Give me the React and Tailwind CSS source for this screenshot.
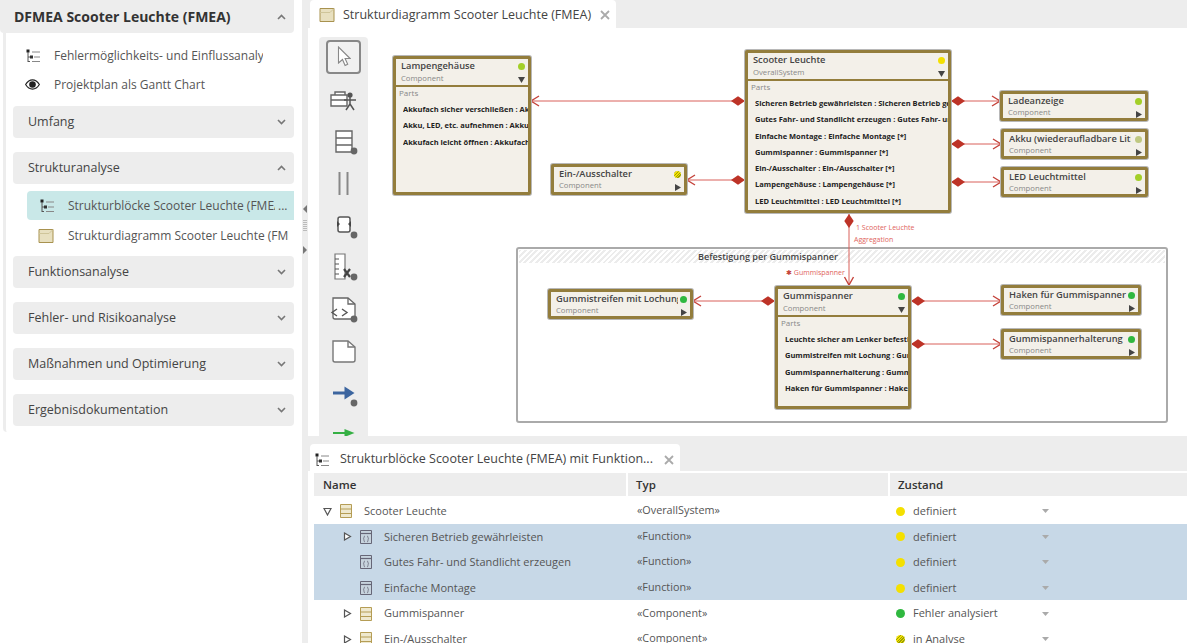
import React from "react";

const ListIcon = ({ className = "" }) => (
  <svg width="14" height="14" viewBox="0 0 14 14" className={className}>
    <rect x="0.5" y="0.5" width="3" height="3" fill="#222" />
    <path d="M2 3v10M2 8h2M2 12.5h2" stroke="#555" strokeWidth="1" fill="none" />
    <rect x="4" y="6.5" width="3" height="3" fill="#333" />
    <path d="M6 3h8M8 8h6M6 12.5h8" stroke="#888" strokeWidth="1" />
  </svg>
);

const DiagramIcon = ({ size = 16 }) => (
  <svg width={size} height={size} viewBox="0 0 16 16">
    <path d="M1 1.500h14v13H1z" fill="#e8e0c0" stroke="#a8924f" strokeWidth="1" />
    <path d="M15 1.500 11 5.500H1" fill="none" stroke="#cfc59a" strokeWidth="1" />
  </svg>
);

const EyeIcon = () => (
  <svg width="15" height="11" viewBox="0 0 16 12">
    <path d="M0.500 6C3 2 5.500 1 8 1s5 1 7.500 5C13 10 10.500 11 8 11S3 10 0.500 6z" fill="#fff" stroke="#222" strokeWidth="1.3" />
    <circle cx="8" cy="6" r="3.600" fill="#222" />
  </svg>
);

const Chevron = ({ up }) => (
  <svg width="9" height="6" viewBox="0 0 9 6">
    <path d={up ? "M1 5l3.500-3.500L8 5" : "M1 1l3.500 3.500L8 1"} fill="none" stroke="#777" strokeWidth="1.6" />
  </svg>
);

const CloseIcon = () => (
  <svg width="10" height="10" viewBox="0 0 10 10">
    <path d="M1 1l8 8M9 1l-8 8" stroke="#aaa" strokeWidth="1.8" />
  </svg>
);

const Section = ({ label, up, className = "" }) => (
  <div className={`flex h-8 items-center justify-between rounded bg-[#ededed] pl-[15px] pr-2 text-[12.5px] text-[#444] ${className}`}>
    <span>{label}</span>
    <Chevron up={up} />
  </div>
);

const Sidebar = () => (
  <div className="relative w-[302px] shrink-0 bg-white text-[12px]">
    <div className="flex h-[33px] w-[294px] items-center justify-between rounded-b bg-[#ededed] pl-[14px] pr-2">
      <span className="text-[14px] font-bold text-[#333]">DFMEA Scooter Leuchte (FMEA)</span>
      <Chevron up />
    </div>
    <div className="ml-[3px] h-[399px] w-[291px] rounded-bl border-l-[3px] border-[#ededed] pl-[7px]">
      <div className="pt-[8px]">
        <div className="flex h-[29px] items-center pt-[1px] text-[#555]">
          <ListIcon className="ml-[13px] mr-[14px] shrink-0" />
          <span className="w-[209px] overflow-hidden whitespace-nowrap">Fehlermöglichkeits- und Einflussanalyse</span>
        </div>
        <div className="flex h-[29px] items-center text-[#555]">
          <span className="ml-[12px] mr-[14px] flex"><EyeIcon /></span>
          <span>Projektplan als Gantt Chart</span>
        </div>
      </div>
      <Section label="Umfang" className="mt-[7px]" />
      <Section label="Strukturanalyse" up className="mt-[14px]" />
      <div className="ml-[14px] mt-[7px] flex h-[29px] items-center rounded-l bg-[#c9e8e8] pt-[1px] text-[#555]">
        <ListIcon className="ml-[13px] mr-[14px] shrink-0" />
        <span className="w-[207px] overflow-hidden whitespace-nowrap">Strukturblöcke Scooter Leuchte (FMEA) mit Funktionen</span>
        <span className="ml-[3px]">...</span>
      </div>
      <div className="ml-[14px] flex h-[29px] items-center pt-[2px] text-[#555]">
        <span className="ml-[11px] mr-[14px] flex"><DiagramIcon /></span>
        <span className="w-[221px] overflow-hidden whitespace-nowrap">Strukturdiagramm Scooter Leuchte (FMEA)</span>
      </div>
      <Section label="Funktionsanalyse" className="mt-[7px]" />
      <Section label="Fehler- und Risikoanalyse" className="mt-[14px]" />
      <Section label="Maßnahmen und Optimierung" className="mt-[14px]" />
      <Section label="Ergebnisdokumentation" className="mt-[14px]" />
    </div>
  </div>
);

const Splitter = () => (
  <div className="flex w-[6px] shrink-0 flex-col items-center bg-[#ededed] pt-[204px] text-[#666]">
    <svg width="4" height="10" viewBox="0 0 4 10"><path d="M4 1v8L0 5z" fill="#777" /></svg>
    <svg width="4" height="14" viewBox="0 0 4 14" className="mt-[5px]">
      <path d="M1 1v12M3 1v12" stroke="#888" strokeWidth="1" strokeDasharray="1 1" />
    </svg>
    <svg width="4" height="10" viewBox="0 0 4 10" className="mt-[12px]"><path d="M0 1v8l4-4z" fill="#777" /></svg>
  </div>
);

const Dot = () => <circle cx="25" cy="25" r="3.400" fill="#666" />;

const toolIcons = [
  <svg key="pointer" width="14" height="22" viewBox="0 0 14 22">
    <path d="M1.500 1v16l4-3.500 2.600 6 2.600-1.200-2.600-5.800h5z" fill="#fff" stroke="#888" strokeWidth="1.1" />
  </svg>,
  <svg key="actor" width="30" height="24" viewBox="0 0 30 24">
    <path d="M2 8h16v11H2zM2 13h16M6 8V5h10v3" fill="#fff" stroke="#666" strokeWidth="1.4" />
    <circle cx="21" cy="8" r="2.600" fill="#555" />
    <path d="M21 10v7M15 13h12M21 17l-4 6M21 17l4 6" stroke="#555" strokeWidth="1.5" fill="none" />
  </svg>,
  <svg key="table" width="30" height="30" viewBox="0 0 30 30">
    <path d="M7 5h16v21H7zM7 12h16M7 19h16" fill="#fff" stroke="#666" strokeWidth="1.4" />
    <Dot />
  </svg>,
  <svg key="lines" width="30" height="30" viewBox="0 0 30 30">
    <path d="M10.500 4v23M18.500 4v23" stroke="#888" strokeWidth="2" />
  </svg>,
  <svg key="port" width="30" height="30" viewBox="0 0 30 30">
    <rect x="9" y="7" width="12" height="15" rx="2" fill="#fff" stroke="#555" strokeWidth="1.5" />
    <path d="M8 11l3 3-3 3zM22 11l-3 3 3 3z" fill="#444" />
    <Dot />
  </svg>,
  <svg key="ruler" width="30" height="30" viewBox="0 0 30 30">
    <path d="M6 2h10v25H6z" fill="#fff" stroke="#777" strokeWidth="1.2" />
    <path d="M6 7h4M6 12h4M6 17h4M6 22h4" stroke="#555" strokeWidth="1.2" />
    <path d="M15 17l6 8M21 17l-6 8" stroke="#444" strokeWidth="2.2" />
    <Dot />
  </svg>,
  <svg key="code" width="30" height="30" viewBox="0 0 30 30">
    <path d="M4 4h15l7 6v13a2 2 0 0 1-2 2H6a2 2 0 0 1-2-2z" fill="#fff" stroke="#666" strokeWidth="1.3" />
    <path d="M19 4v6h7" fill="none" stroke="#666" strokeWidth="1.3" />
    <path d="M8 15l-5 3.500 5 3.500M13 15l5 3.500-5 3.500" fill="none" stroke="#555" strokeWidth="1.4" />
    <Dot />
  </svg>,
  <svg key="note" width="30" height="30" viewBox="0 0 30 30">
    <path d="M4 5h15l7 6v13a2 2 0 0 1-2 2H6a2 2 0 0 1-2-2z" fill="#fff" stroke="#777" strokeWidth="1.4" />
    <path d="M19 5v6h7" fill="none" stroke="#777" strokeWidth="1.4" />
  </svg>,
  <svg key="blue" width="30" height="30" viewBox="0 0 30 30">
    <path d="M4 15h13" stroke="#3c659f" strokeWidth="3" />
    <path d="M15.500 8.500l10 6.500-10 6.500z" fill="#3c659f" />
    <Dot />
  </svg>,
  <svg key="green" width="30" height="30" viewBox="0 0 30 30">
    <path d="M4 13h13" stroke="#35b044" strokeWidth="2" />
    <path d="M15.500 9l10 4-10 4z" fill="#35b044" />
  </svg>,
];

const Toolbar = () => (
  <div className="ml-[11px] mt-[9px] flex w-[49px] shrink-0 flex-col items-center overflow-hidden rounded-t bg-[#ededed] pt-[3px]">
    <div className="mb-[4px] flex h-[34px] w-[35px] shrink-0 items-center justify-center rounded border-2 border-[#888] bg-[#f1f1f1]">
      {toolIcons[0]}
    </div>
    {toolIcons.slice(1).map((icon) => (
      <div key={icon.key} className="flex h-[42px] w-full shrink-0 items-center justify-center">{icon}</div>
    ))}
  </div>
);

const statusDot = {
  lime: "bg-[#a3cf28]",
  yellow: "bg-[#f4e000]",
  green: "bg-[#2fb83f]",
  olive: "bg-[#bfc880]",
  hatch: "bg-[repeating-linear-gradient(135deg,#f4e000_0,#f4e000_1px,#9aa000_1px,#9aa000_2px)]",
};

const Node = ({ pos, title, sub = "Component", dot, parts, down }) => (
  <div className={`absolute rounded-[2px] border-[3px] border-[#937d3c] bg-[#f3f0e9] shadow-[0_0_0_1px_#b8b8b8] ${pos}`}>
    <div className="relative h-[26px] pl-[5px]">
      <div className="w-[122px] overflow-hidden whitespace-nowrap text-[9.3px] font-semibold leading-[13px] text-[#444]">{title}</div>
      <div className={`text-[7.7px] leading-[11px] text-[#888] ${parts ? "pt-[1px]" : ""}`}>{sub}</div>
      <span className={`absolute right-[3px] top-[4px] h-[7px] w-[7px] rounded-full ${statusDot[dot]}`} />
      <span className="absolute bottom-[2px] right-[3px] flex">
        {down ? (
          <svg width="7" height="6" viewBox="0 0 7 6"><path d="M0 0h7L3.500 6z" fill="#444" /></svg>
        ) : (
          <svg width="6" height="7" viewBox="0 0 6 7"><path d="M0 0l6 3.500L0 7z" fill="#444" /></svg>
        )}
      </span>
    </div>
    {parts && (
      <div className="overflow-hidden border-t-2 border-[#937d3c] pl-[3px]">
        <div className="text-[8px] leading-[12px] text-[#888]">Parts</div>
        {parts.map((p) => (
          <div key={p} className="ml-[4px] mt-[4px] overflow-hidden whitespace-nowrap text-[7.5px] font-bold leading-[12.3px] text-[#222]">{p}</div>
        ))}
      </div>
    )}
  </div>
);

// open arrow tip + filled diamond, coordinates are relative to the canvas
const Edge = ({ x1, x2, y, flip }) => (
  <g>
    <path d={`M${x1} ${y}H${x2}`} stroke="#d9605a" strokeWidth="1" />
    <path d={flip ? `M${x2 - 8} ${y - 5}l8 5 -8 5` : `M${x1 + 8} ${y - 5}l-8 5 8 5`} fill="none" stroke="#c4423a" strokeWidth="1.4" />
    <path
      d={flip ? `M${x1} ${y}l7 -4.800 7 4.800 -7 4.800z` : `M${x2} ${y}l-7 -4.800 -7 4.800 7 4.800z`}
      fill="#bd3327"
    />
  </g>
);

const Diagram = () => (
  <div className="relative flex-1 overflow-hidden">
    <div className="absolute left-[148px] top-[219px] h-[176px] w-[652px] rounded-[3px] border-2 border-[#aaa] bg-white p-[1px]">
      <div className="flex h-[13px] items-center bg-[repeating-linear-gradient(135deg,#ececec_0,#ececec_2px,#fff_2px,#fff_4px)] pl-[179px] text-[9.1px] font-semibold text-[#444]">
        <span>Befestigung per Gummispanner</span>
      </div>
    </div>
    <svg className="absolute inset-0 h-full w-full" viewBox="0 0 819 408">
      <Edge x1={163} x2={377} y={73} />
      <Edge x1={319} x2={377} y={152} />
      <Edge x1={583} x2={632} y={73} flip />
      <Edge x1={583} x2={633} y={116} flip />
      <Edge x1={583} x2={633} y={154} flip />
      <Edge x1={325} x2={407} y={273} />
      <Edge x1={543} x2={633} y={273} flip />
      <Edge x1={543} x2={633} y={316} flip />
      <path d="M481 186V257" stroke="#d9605a" strokeWidth="1" />
      <path d="M481 186l-4.700 7 4.700 7 4.700-7z" fill="#bd3327" />
      <path d="M476.500 249l4.500 8 4.500-8" fill="none" stroke="#c4423a" strokeWidth="1.4" />
    </svg>
    <Node pos="left-[25px] top-[28px] h-[139px] w-[138px]" title="Lampengehäuse" dot="lime" down
      parts={["Akkufach sicher verschließen : Akkufach sicher verschließen [*]", "Akku, LED, etc. aufnehmen : Akku, LED, etc. aufnehmen [*]", "Akkufach leicht öffnen : Akkufach leicht öffnen [*]"]} />
    <Node pos="left-[183px] top-[136px] h-[31px] w-[136px]" title="Ein-/Ausschalter" dot="hatch" />
    <Node pos="left-[377px] top-[22px] h-[163px] w-[206px]" title="Scooter Leuchte" sub="OverallSystem" dot="yellow" down
      parts={["Sicheren Betrieb gewährleisten : Sicheren Betrieb gewährleisten [*]", "Gutes Fahr- und Standlicht erzeugen : Gutes Fahr- und Standlicht [*]", "Einfache Montage : Einfache Montage [*]", "Gummispanner : Gummispanner [*]", "Ein-/Ausschalter : Ein-/Ausschalter [*]", "Lampengehäuse : Lampengehäuse [*]", "LED Leuchtmittel : LED Leuchtmittel [*]"]} />
    <Node pos="left-[632px] top-[63px] h-[30px] w-[148px]" title="Ladeanzeige" dot="lime" />
    <Node pos="left-[633px] top-[101px] h-[30px] w-[147px]" title="Akku (wiederaufladbare Lithium-Ionen)" dot="olive" />
    <Node pos="left-[633px] top-[139px] h-[30px] w-[147px]" title="LED Leuchtmittel" dot="lime" />
    <Node pos="left-[180px] top-[261px] h-[30px] w-[145px]" title="Gummistreifen mit Lochung" dot="green" />
    <Node pos="left-[407px] top-[258px] h-[123px] w-[136px]" title="Gummispanner" dot="green" down
      parts={["Leuchte sicher am Lenker befestigen : Leuchte", "Gummistreifen mit Lochung : Gummistreifen", "Gummispannerhalterung : Gummispannerhalterung", "Haken für Gummispanner : Haken für Gummispanner"]} />
    <Node pos="left-[633px] top-[257px] h-[30px] w-[140px]" title="Haken für Gummispanner" dot="green" />
    <Node pos="left-[633px] top-[301px] h-[30px] w-[140px]" title="Gummispannerhalterung" dot="green" />
    <div className="absolute left-[488px] top-[195px] whitespace-nowrap text-[7px] leading-[10px] text-[#e0645c]">1 Scooter Leuchte</div>
    <div className="absolute left-[486px] top-[207px] whitespace-nowrap text-[7px] leading-[10px] text-[#e0645c]">Aggregation</div>
    <div className="absolute left-[418px] top-[240px] whitespace-nowrap text-[7px] leading-[10px] text-[#e0645c]"><span className="text-[#c4423a]">✱</span> Gummispanner</div>
  </div>
);

const BlockIcon = () => (
  <svg width="12" height="14" viewBox="0 0 12 14">
    <path d="M0.500 0.500h11v13H0.500z" fill="#efe9cf" stroke="#b59d55" strokeWidth="1" />
    <path d="M0.500 5h11M0.500 9.500h11" stroke="#b59d55" strokeWidth="1" />
  </svg>
);

const FunctionIcon = () => (
  <svg width="12" height="14" viewBox="0 0 12 14">
    <path d="M0.500 0.500h11v13H0.500z" fill="#c7d3dd" stroke="#667" strokeWidth="1" />
    <path d="M0.500 3.500h11" stroke="#667" strokeWidth="1.2" />
    <path d="M5 6c-1.300 0-.7 2-1.500 2.800C4.300 9.500 3.700 12 5 12M7 6c1.300 0 .7 2 1.500 2.800C7.700 9.500 8.300 12 7 12" fill="none" stroke="#667" strokeWidth="0.8" />
  </svg>
);

const Tree = ({ open }) => (
  <svg width="9" height="9" viewBox="0 0 9 9">
    <path d={open ? "M1 1.500h7L4.500 8z" : "M1.500 1l6 3.500-6 3.500z"} fill="#fff" stroke="#555" strokeWidth="1.2" />
  </svg>
);

const stateDot = {
  definiert: "bg-[#f4e000]",
  "Fehler analysiert": "bg-[#2fb83f]",
  "in Analyse": "bg-[repeating-linear-gradient(135deg,#f4e000_0,#f4e000_1px,#9aa000_1px,#9aa000_2px)]",
};

const rows = [
  { name: "Scooter Leuchte", typ: "«OverallSystem»", state: "definiert", depth: 0, tree: "open", icon: "block" },
  { name: "Sicheren Betrieb gewährleisten", typ: "«Function»", state: "definiert", depth: 1, tree: "closed", icon: "fn", sel: true },
  { name: "Gutes Fahr- und Standlicht erzeugen", typ: "«Function»", state: "definiert", depth: 1, icon: "fn", sel: true },
  { name: "Einfache Montage", typ: "«Function»", state: "definiert", depth: 1, icon: "fn", sel: true },
  { name: "Gummispanner", typ: "«Component»", state: "Fehler analysiert", depth: 1, tree: "closed", icon: "block" },
  { name: "Ein-/Ausschalter", typ: "«Component»", state: "in Analyse", depth: 1, tree: "closed", icon: "block" },
];

const Table = () => (
  <div className="ml-[6px] flex-1 overflow-hidden pt-[2px] text-[11px]">
    <div className="flex h-[23px] items-center bg-[#ededed] text-[11.5px] font-semibold text-[#333]">
      <div className="w-[312px] pl-[9px]">Name</div>
      <div className="h-full w-[262px] border-l-2 border-white pl-[8px] leading-[23px]">Typ</div>
      <div className="h-full flex-1 border-l-2 border-white pl-[8px] leading-[23px]">Zustand</div>
    </div>
    <div className="pt-[2px]">
      {rows.map((r) => (
        <div key={r.name} className={`flex h-[25.6px] items-center pt-[1px] text-[#555] ${r.sel ? "bg-[#c7d8e7]" : ""}`}>
          <div className={`flex w-[312px] items-center ${r.depth ? "pl-[29px]" : "pl-[9px]"}`}>
            <span className="flex w-[17px]">{r.tree && <Tree open={r.tree === "open"} />}</span>
            {r.icon === "block" ? <BlockIcon /> : <FunctionIcon />}
            <span className="ml-[12px] whitespace-nowrap">{r.name}</span>
          </div>
          <div className="w-[262px] pb-[2px] pl-[11px] text-[10.8px]">{r.typ}</div>
          <div className="flex w-[150px] items-center pl-[8px]">
            <span className={`mr-[8px] h-[9px] w-[9px] rounded-full ${stateDot[r.state]}`} />
            <span>{r.state}</span>
          </div>
          <svg width="7" height="4" viewBox="0 0 7 4" className="ml-[4px]"><path d="M0 0h7L3.500 4z" fill="#aaa" /></svg>
        </div>
      ))}
    </div>
  </div>
);

export default function App() {
  return (
    <div className="flex h-[643px] w-[1187px] overflow-hidden bg-white font-['Open_Sans',sans-serif]">
      <Sidebar />
      <Splitter />
      <div className="flex min-w-0 flex-1 flex-col">
        <div className="flex h-[28px] shrink-0 bg-[#ededed]">
          <div className="ml-[2px] flex w-[306px] items-center rounded-t bg-white pl-[9px] pt-[2px] text-[12.5px] text-[#444]">
            <DiagramIcon />
            <span className="ml-[8px]">Strukturdiagramm Scooter Leuchte (FMEA)</span>
            <span className="ml-[9px] flex"><CloseIcon /></span>
          </div>
        </div>
        <div className="flex h-[408px] shrink-0">
          <Toolbar />
          <Diagram />
        </div>
        <div className="h-[8px] shrink-0 bg-[#ededed]" />
        <div className="flex h-[27px] shrink-0 bg-[#ededed]">
          <div className="ml-[2px] flex w-[370px] items-center rounded-t bg-white pl-[5px] pt-[4px] text-[12.5px] text-[#444]">
            <ListIcon className="shrink-0" />
            <span className="ml-[11px] whitespace-nowrap">Strukturblöcke Scooter Leuchte (FMEA) mit Funktion...</span>
            <span className="ml-[11px] flex"><CloseIcon /></span>
          </div>
        </div>
        <Table />
      </div>
    </div>
  );
}
